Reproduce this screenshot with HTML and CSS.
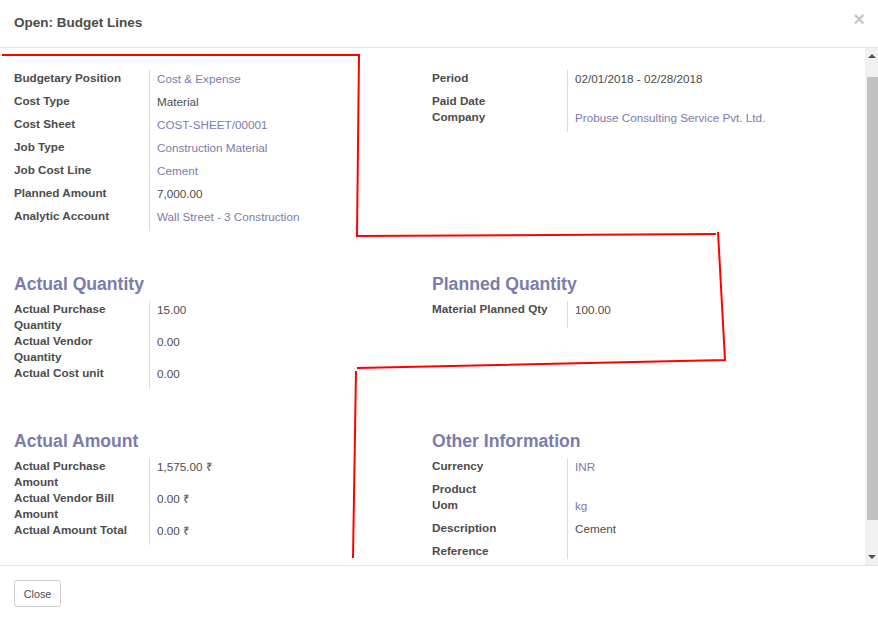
FILE: index.html
```html
<!DOCTYPE html>
<html>
<head>
<meta charset="utf-8">
<link rel="stylesheet" href="styles.css">
</head>
<body>
<div class="modal">
  <div class="modal-header">
    <div class="modal-title">Open: Budget Lines</div>
    <div class="modal-close">×</div>
  </div>
  <div class="modal-body">
    <div class="content">
      <div class="cols">
        <div class="group">
          <div class="lbl">Budgetary Position</div><div class="val link">Cost &amp; Expense</div>
          <div class="lbl">Cost Type</div><div class="val">Material</div>
          <div class="lbl">Cost Sheet</div><div class="val link">COST-SHEET/00001</div>
          <div class="lbl">Job Type</div><div class="val link">Construction Material</div>
          <div class="lbl">Job Cost Line</div><div class="val link">Cement</div>
          <div class="lbl">Planned Amount</div><div class="val">7,000.00</div>
          <div class="lbl">Analytic Account</div><div class="val link">Wall Street - 3 Construction</div>
        </div>
        <div class="group">
          <div class="lbl">Period</div><div class="val">02/01/2018 - 02/28/2018</div>
          <div class="lbl">Paid Date</div><div class="val empty"></div>
          <div class="lbl">Company</div><div class="val link">Probuse Consulting Service Pvt. Ltd.</div>
        </div>
      </div>

      <div class="cols">
        <div class="section">
          <div class="sep-title">Actual Quantity</div>
          <div class="group">
            <div class="lbl">Actual Purchase Quantity</div><div class="val">15.00</div>
            <div class="lbl">Actual Vendor Quantity</div><div class="val">0.00</div>
            <div class="lbl">Actual Cost unit</div><div class="val">0.00</div>
          </div>
        </div>
        <div class="section">
          <div class="sep-title">Planned Quantity</div>
          <div class="group">
            <div class="lbl">Material Planned Qty</div><div class="val tall">100.00</div>
          </div>
        </div>
      </div>

      <div class="cols">
        <div class="section">
          <div class="sep-title">Actual Amount</div>
          <div class="group">
            <div class="lbl">Actual Purchase Amount</div><div class="val">1,575.00 ₹</div>
            <div class="lbl">Actual Vendor Bill Amount</div><div class="val">0.00 ₹</div>
            <div class="lbl">Actual Amount Total</div><div class="val">0.00 ₹</div>
          </div>
        </div>
        <div class="section">
          <div class="sep-title">Other Information</div>
          <div class="group">
            <div class="lbl">Currency</div><div class="val link">INR</div>
            <div class="lbl">Product</div><div class="val empty"></div>
            <div class="lbl">Uom</div><div class="val link">kg</div>
            <div class="lbl">Description</div><div class="val">Cement</div>
            <div class="lbl">Reference</div><div class="val empty"></div>
          </div>
        </div>
      </div>
    </div>
    <div class="scrollbar">
      <div class="sb-btn"><span class="arrow-up"></span></div>
      <div class="sb-track"><div class="sb-thumb"></div></div>
      <div class="sb-btn"><span class="arrow-down"></span></div>
    </div>
  </div>
  <div class="modal-footer">
    <button class="btn">Close</button>
  </div>
</div>
<svg class="annot" width="878" height="618" viewBox="0 0 878 618">
  <polyline points="2,55 359,55 357,236 716,234" fill="none" stroke="#ff0000" stroke-width="2"/>
  <polyline points="718,232 725,360 357,368" fill="none" stroke="#ff0000" stroke-width="2"/>
  <polyline points="356,371 353,558" fill="none" stroke="#ff0000" stroke-width="2"/>
</svg>
</body>
</html>
```
FILE: styles.css
```css
html, body {
  margin: 0;
  padding: 0;
  background: #fff;
}
body {
  font-family: "Liberation Sans", Arial, sans-serif;
  font-size: 11.7px;
  color: #4c4c4c;
  width: 878px;
  height: 618px;
  overflow: hidden;
  position: relative;
}
.modal {
  display: flex;
  flex-direction: column;
  height: 618px;
}
.modal-header {
  flex: 0 0 auto;
  height: 47px;
  border-bottom: 1px solid #e5e5e5;
  display: flex;
  justify-content: space-between;
  padding: 0 13px 0 14px;
  box-sizing: content-box;
}
.modal-title {
  font-size: 13.5px;
  font-weight: bold;
  color: #4c4c4c;
  line-height: 16px;
  margin-top: 15px;
}
.modal-close {
  font-size: 20px;
  font-weight: bold;
  color: #c8c8c8;
  line-height: 20px;
  margin-top: 9px;
}
.modal-body {
  flex: 0 0 517px;
  display: flex;
  height: 517px;
  overflow: hidden;
}
.content {
  flex: 1;
  padding: 22px 14px 0 14px;
  overflow: hidden;
}
.cols {
  display: grid;
  grid-template-columns: 418px 1fr;
  align-items: start;
}
.group {
  display: grid;
  grid-template-columns: 135px 1fr;
  align-content: start;
}
.lbl {
  font-weight: bold;
  line-height: 16px;
  padding-right: 6px;
  color: #4c4c4c;
}
.val {
  border-left: 1px solid #dcdcdc;
  padding: 1px 0 6px 7px;
  line-height: 16px;
  color: #4c4c4c;
}
.val.empty {
  padding: 0 0 0 7px;
}
.val.tall {
  padding-bottom: 10px;
}
.link {
  color: #7c7bad;
}
.sep-title {
  font-size: 17.6px;
  font-weight: bold;
  color: #7c7bad;
  line-height: 24px;
  margin: 41px 0 5px 0;
}
.scrollbar {
  width: 13px;
  background: #f1f1f1;
  display: flex;
  flex-direction: column;
}
.sb-btn {
  height: 16px;
  display: flex;
  align-items: center;
  justify-content: center;
}
.arrow-up {
  width: 0;
  height: 0;
  border-left: 4px solid transparent;
  border-right: 4px solid transparent;
  border-bottom: 4px solid #505050;
  margin-left: 1px;
}
.arrow-down {
  width: 0;
  height: 0;
  border-left: 4px solid transparent;
  border-right: 4px solid transparent;
  border-top: 4px solid #505050;
  margin-left: 1px;
}
.sb-track {
  flex: 1;
  padding-top: 13px;
}
.sb-thumb {
  margin-left: 2px;
  height: 443px;
  background: #c1c1c1;
}
.modal-footer {
  border-top: 1px solid #e5e5e5;
  flex: 1 1 auto;
  min-height: 0;
  overflow: hidden;
  padding: 14px 14px 0 14px;
}
.btn {
  font-family: "Liberation Sans", Arial, sans-serif;
  font-size: 10.8px;
  color: #4c4c4c;
  background: #fff;
  border: 1px solid #cccccc;
  border-radius: 3px;
  height: 27px;
  width: 47px;
  padding: 0;
  margin: 0;
  display: block;
}
.annot {
  position: absolute;
  left: 0;
  top: 0;
  pointer-events: none;
}
```
